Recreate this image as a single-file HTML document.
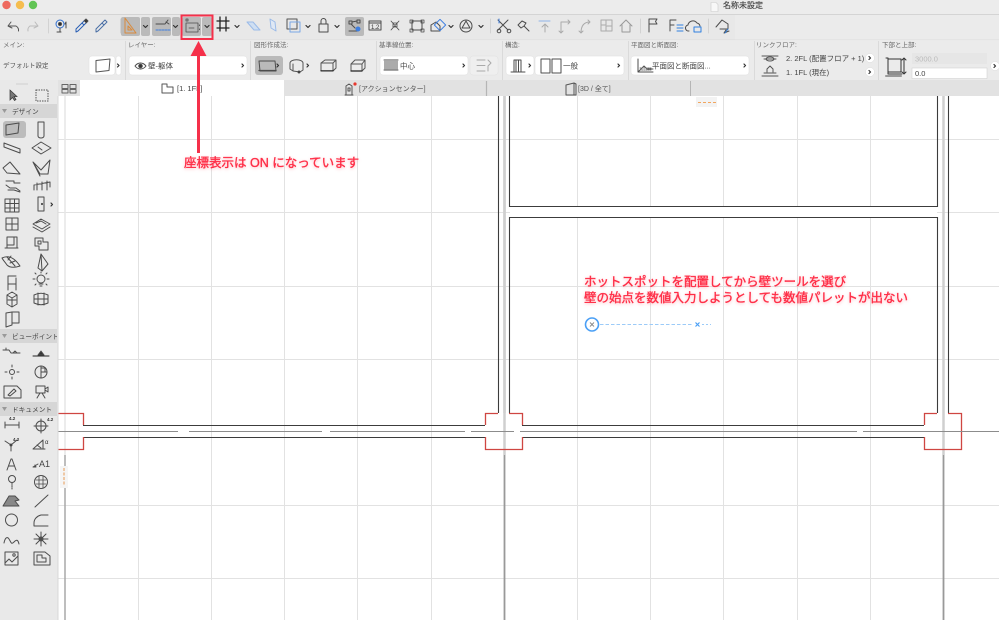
<!DOCTYPE html>
<html><head><meta charset="utf-8"><style>
html,body{margin:0;padding:0;background:#fff;width:999px;height:620px;overflow:hidden}
svg.root{display:block;filter:blur(.35px)}
text{font-family:"Liberation Sans","Noto Sans CJK JP",sans-serif}
.l{font-size:6.5px;fill:#666}
.t{font-size:7.5px;fill:#444}
.i{fill:none;stroke:#4c4c4c;stroke-width:1;stroke-linejoin:round;stroke-linecap:round}
.ch{fill:none;stroke:#333;stroke-width:1.2;stroke-linecap:round;stroke-linejoin:round}
.w{fill:#fff;stroke:#ddd;stroke-width:.5}
.d{fill:none;stroke:#3c3c3c;stroke-width:1.1}
.r{fill:none;stroke:#cf4642;stroke-width:1.3}
.g{stroke:#e2e2e2;stroke-width:1}
.a{font-size:12.500px;fill:#ff2d46;stroke:#ff2d46;stroke-width:.35px}
</style></head><body>
<svg class="root" width="999" height="620" viewBox="0 0 999 620" xmlns="http://www.w3.org/2000/svg">
<defs><clipPath id="pal"><rect x="0" y="96" width="57" height="524"/></clipPath></defs>
<rect width="999" height="620" fill="#fff"/>
<!-- canvas grid -->
<g class="g">
<path d="M138.500 96V620M211.500 96V620M284.500 96V620M357.500 96V620M431.500 96V620M577.500 96V620M650.500 96V620M723.500 96V620M797.500 96V620M870.500 96V620"/>
<path d="M58 139.500H999M58 212.500H999M58 286.500H999M58 359.500H999M58 505.500H999M58 578.500H999"/>
</g>
<path d="M65 96V455" stroke="#e6e6e6" stroke-width="1.500"/>
<path d="M504.500 96V455M943.500 96V455" stroke="#cfcfcf" stroke-width="2.500"/>
<path d="M65 455V620" stroke="#a8a8a8" stroke-width="1.500"/>
<path d="M504.500 455V620M943.500 455V620" stroke="#999" stroke-width="1.800"/>
<!-- white-out behind walls -->
<rect x="510" y="207" width="427" height="10" fill="#fff"/>
<path d="M504.500 96V413" stroke="#cfcfcf" stroke-width="2.500"/>
<!-- walls -->
<path class="d" d="M83 425.500H485M83 437.500H485M522 425.500H924M522 437.500H924M498.500 96V413M509.500 96V206.500H937.500V96M509.500 413V217.500H937.500V413M948.500 96V413"/>
<path class="r" d="M58 413.500H83.500V425M58 449.500H83.500V437M498 413.500H485.500V425M509 413.500H522.500V425M485.500 437V449.500H522.500V437M937 413.500H924.500V425M948 413.500H961.500V449.500H924.500V437"/>
<path d="M58 431.500H999" stroke="#8c8c8c" stroke-width="1"/>
<path d="M178 431.500h11M322 431.500h8M465 431.500h6M857 431.500h6M514 431.500h6" stroke="#fff" stroke-width="2"/>
<!-- orange marks -->
<rect x="696" y="97" width="21" height="10" fill="#f3f3f3"/>
<path d="M698 102.500h18" stroke="#f2a65e" stroke-width="1" stroke-dasharray="3 2"/>
<rect x="60" y="466" width="8" height="22" fill="#f5f5f5"/>
<path d="M64 468v18" stroke="#e89a55" stroke-width="1" stroke-dasharray="3 1.500"/>
<!-- hotspot -->
<circle cx="592" cy="324.500" r="6.500" fill="#fff" stroke="#4a9ff5" stroke-width="1.600"/>
<path d="M590 322.500l4 4M594 322.500l-4 4" stroke="#888" stroke-width=".9"/>
<path d="M600 324.500h92" stroke="#9ccbf8" stroke-width="1" stroke-dasharray="3.500 2"/>
<path d="M695.500 322.500l4 4M699.500 322.500l-4 4" stroke="#4a9ff5" stroke-width="1.200"/>
<path d="M702 324.500h9" stroke="#9ccbf8" stroke-width="1" stroke-dasharray="2 2"/>
<!-- annotations -->
<g style="filter:drop-shadow(0 1px 1.500px rgba(255,60,80,.35))">
<text class="a" x="184" y="167">座標表示は ON になっています</text>
<text class="a" x="584" y="286">ホットスポットを配置してから壁ツールを選び</text>
<text class="a" x="584" y="302">壁の始点を数値入力しようとしても数値パレットが出ない</text>
</g>

<!-- chrome backgrounds -->
<rect x="0" y="0" width="999" height="14" fill="#ececec"/>
<rect x="0" y="14" width="999" height="1" fill="#d4d4d4"/>
<rect x="0" y="15" width="999" height="25" fill="#ebebeb"/>
<rect x="0" y="15" width="735" height="25" fill="#e8e8e8"/>
<rect x="0" y="40" width="999" height="40" fill="#ebebeb"/>
<rect x="0" y="39.500" width="999" height=".6" fill="#dcdcdc"/>
<rect x="0" y="80" width="999" height="16" fill="#e2e2e2"/>
<rect x="0" y="80" width="58" height="540" fill="#e9e9e9"/>
<rect x="57.500" y="96" width="1" height="524" fill="#d8d8d8"/>
<rect x="80" y="80" width="204" height="16" fill="#fff"/>
<path d="M486.500 81V96" stroke="#b5b5b5" stroke-width="1.200"/>
<path d="M690.500 81V96" stroke="#b5b5b5" stroke-width="1"/>
<path d="M125.500 41V80M250.500 41V80M376.500 41V80M502.500 41V80M628.500 41V80M754.500 41V80M878.500 41V80" stroke="#dadada"/>

<!-- traffic lights -->
<circle cx="6.500" cy="5" r="4.200" fill="#ee6a5f"/>
<circle cx="20" cy="5" r="4.200" fill="#f5bd4f"/>
<circle cx="33" cy="5" r="4.200" fill="#61c454"/>
<!-- title -->
<path d="M711 2.500h5l2 2v7h-7z" fill="#f8f8f8" stroke="#ccc" stroke-width=".6"/>
<text x="723" y="8" style="font-size:8px;fill:#444;stroke:#444;stroke-width:.15px">名称未設定</text>

<!-- toolbar gray buttons -->
<g fill="#bababa">
<rect x="121" y="17" width="19" height="19" rx="2"/><rect x="141" y="17" width="9" height="19" rx="2"/>
<rect x="152" y="17" width="19" height="19" rx="2"/><rect x="172" y="17" width="8" height="19" rx="2"/>
<rect x="182" y="17" width="19" height="19" rx="2"/><rect x="202" y="17" width="10" height="19" rx="2"/>
<rect x="345" y="17" width="19" height="19" rx="2"/>
</g>
<!-- toolbar chevrons -->
<g class="ch">
<path d="M143.500 25.500l2 2 2-2M173.500 25.500l2 2 2-2M205 25.500l2 2 2-2M235 25.500l2 2 2-2M306 25.500l2 2 2-2M335 25.500l2 2 2-2M449 25.500l2 2 2-2M479 25.500l2 2 2-2"/>
</g>
<!-- toolbar icons -->
<g class="i">
<path d="M8 26l3-4M8 26l4 2M8 26h8a5 5 0 0 1 2.500 5" stroke="#555"/>
<path d="M38 26l-3-4M38 26l-4 2M38 26h-8a5 5 0 0 0-2 5" stroke="#bbb"/>
<path d="M48.500 19V33M120.500 19V33M490.500 19V33M640.500 19V33M708.500 19V33" stroke="#d2d2d2"/>
<circle cx="60" cy="24" r="4" stroke="#2f6fd0"/><circle cx="60" cy="24" r="1.500" fill="#222"/><path d="M60 28v4M57 32h4M66 22v6M66 22l-1 2"/>
<path d="M76 32l2-1 6-6-2-2-6 6zM82 23l3-3 2 2-3 3" stroke="#2a5fb5"/><path d="M84 21l2-2 2 2-2 2" fill="#333"/>
<path d="M96 32l2-1 6-6-2-2-6 6zM102 23l3-3 2 2-3 3" stroke="#4a6fa5"/>
<path d="M125 33V18l11 15zM128 30v-4l4 4z" stroke="#d98a3c"/>
<path d="M156 24h7M163 24h2l3-4M166 22l3 2"/><path d="M156 30h15" stroke="#3f7fe0" stroke-dasharray="2 1"/>
<rect x="186" y="23" width="12" height="9" stroke-width=".8"/><path d="M186 19h2v2h-2zM189 28h5" stroke-width=".8"/><path d="M199.500 25v.5M199.500 29v.5"/>
<path d="M217 21h12M217 28h12M220 17v14M226 17v14" stroke-width="1.300" stroke="#222"/>
<path d="M247 22l6 0 7 8h-6z" stroke="#9bbbe8" fill="#cfdff2"/>
<path d="M270 19l5 3 1 9-5-3z" stroke="#9bbbe8" fill="#dfe8f4"/>
<rect x="287" y="19" width="10" height="10" stroke="#555"/><rect x="290" y="22" width="10" height="10" stroke="#7aa7e6"/>
<rect x="319" y="24" width="9" height="8"/><path d="M321 24v-3a2.500 2.500 0 0 1 5 0v3"/>
<path d="M349 21h3v3h-3zM357 20h3v3h-3zM352 22l5-1M351 24l4 4M349 31h9"/><circle cx="358" cy="29" r="2" fill="#3f7fe0" stroke="#3f7fe0"/>
<rect x="369" y="21" width="12" height="9"/><text x="371" y="29" style="font-size:6px;fill:#333;stroke:none">1.2</text><path d="M369 23h12"/>
<path d="M391 21l8 9M399 21l-8 9M393 23h4v4h-4z" stroke-width=".8"/>
<rect x="412" y="21" width="10" height="9"/><path d="M410 20h3v3h-3zM421 20h3v3h-3zM410 29h3v3h-3zM421 29h3v3h-3z" stroke-width=".8"/>
<path d="M431 30v-5l5-3 4 4v5h-9z"/><rect x="436" y="21" width="8" height="8" transform="rotate(45 440 25)" stroke="#3f7fe0"/>
<circle cx="466" cy="26" r="6"/><path d="M466 21l4 7h-8z"/>
<path d="M498 20l10 10M508 20l-10 10"/><circle cx="499" cy="31" r="1.800"/><circle cx="509" cy="31" r="1.800"/><path d="M499 19v4" stroke="#3f7fe0"/>
<path d="M518 25l4-4 4 2-2 3 5 5M518 25l3 3 3-2"/>
<path d="M545 32v-8M542 27l3-3 3 3" stroke="#aaa"/><path d="M539 21h11" stroke="#8fb4e8"/>
<path d="M561 33V22h9M559 31l2 2 2-2M568 20l2 2-2 2" stroke="#aaa"/>
<path d="M581 33c0-7 3-11 9-11M579 31l2 2 2-2M588 20l2 2-2 2" stroke="#aaa"/>
<rect x="601" y="20" width="11" height="11" stroke="#aaa"/><path d="M601 25h5v-5M606 31v-5h6" stroke="#aaa"/>
<path d="M620 26l6-6 6 6M622 25v7h8v-7" stroke="#999"/>
<path d="M649 32V19h8l-1.500 2.500L657 24h-8"/>
<path d="M670 31V20h6M670 25h4"/><path d="M677 25h6M677 28h6M677 31h6" stroke="#2f7fe0"/>
<path d="M689 31a3 3 0 0 1-1-6 5 5 0 0 1 9-2 4 4 0 0 1 3 3"/><rect x="694" y="27" width="7" height="5" stroke="#2f7fe0"/>
<path d="M716 27l6-7 6 4v5h-8M726 30l-2 3 5-2"/><path d="M725 33l3-4" stroke="#2f7fe0"/>
</g>

<!-- info labels -->
<text class="l" x="3" y="47">メイン:</text>
<text class="l" x="128" y="47">レイヤー:</text>
<text class="l" x="254" y="47">図形作成法:</text>
<text class="l" x="379" y="47">基準線位置:</text>
<text class="l" x="505" y="47">構造:</text>
<text class="l" x="631" y="47">平面図と断面図:</text>
<text class="l" x="756" y="47">リンクフロア:</text>
<text class="l" x="882" y="47">下部と上部:</text>
<text x="3" y="67.500" style="font-size:6.500px;fill:#555">デフォルト設定</text>

<!-- info controls -->
<rect class="w" x="89" y="56" width="26" height="19" rx="3"/>
<rect class="w" x="116" y="56" width="5" height="19" rx="2"/>
<rect class="w" x="129" y="56" width="118" height="19" rx="3"/>
<rect x="255" y="56" width="28" height="19" rx="3" fill="#bababa"/>
<rect class="w" x="380" y="56" width="88" height="19" rx="3"/>
<rect x="470" y="56" width="28" height="19" rx="3" fill="#efefef" stroke="#e0e0e0" stroke-width=".5"/>
<rect class="w" x="506" y="56" width="28" height="19" rx="3"/>
<rect class="w" x="535" y="56" width="89" height="19" rx="3"/>
<rect class="w" x="631" y="56" width="118" height="19" rx="3"/>
<g class="i">
<path d="M96 60.500l14-1.500-1 11.500-13 1.500z" stroke="#555"/>
<path d="M135 66c3-4 8-4 11 0-3 4-8 4-11 0z"/><circle cx="140.500" cy="66" r="1.800" fill="#333"/>
<path d="M259 61l16 0 1 10-16 0z"/><path d="M259 70.500h17" stroke-width="1.300"/>
<path d="M290 63a6 3 0 0 1 13 0v7l-3 2-7-1-3-2zM293 64v7" stroke="#555"/><circle cx="299" cy="72" r="1" fill="#222"/>
<path d="M321 63l4-3h11v8l-3 3h-12zM321 63h12v8M333 63l3-3" stroke="#555"/><path d="M321 70.800h12" stroke="#222" stroke-width="1.200"/>
<path d="M351 64l4-4h10v8l-3 3h-11zM351 64h11v7M362 64l3-4" stroke="#555"/><path d="M351 71h11" stroke="#222" stroke-width="1.200"/>
<path d="M384 60h14M384 70h14"/>
<path d="M477 60h8M477 71h8M477 65.500h8M488 60l3 3-3 3v5" stroke="#aaa"/>
<path d="M511 72h14M514 72V60h7v12M516 60v12M518.500 60v12"/>
<rect x="541" y="59" width="9" height="14"/><rect x="552" y="59" width="9" height="14"/>
<path d="M638 59v13h15M638 72l6-6 3 3 6 0"/><path d="M640 68h12M640 70h12" stroke="#777" stroke-dasharray="1 1"/>
<path d="M762 56h16M764 59h12M766 59a4 2 0 0 1 8 0 4 2 0 0 1-8 0" stroke="#555"/>
<path d="M762 76h16M764 73h12M767 72v-3l3-3 3 3v3" stroke="#555"/>
<rect x="888" y="59" width="13" height="13" stroke="#333"/><path d="M886 58h2v16h14M904 58v16M902 60l2-2 2 2M902 72l2 2 2-2" stroke="#333"/>
<path d="M886 76h15" stroke="#999" stroke-width="2"/>
</g>
<rect x="384" y="61" width="14" height="9" fill="#888" opacity=".7"/>
<text class="t" x="148" y="68.500">壁-躯体</text>
<text class="t" x="400" y="68.500">中心</text>
<text class="t" x="563" y="68.500">一般</text>
<text class="t" x="652" y="68.500">平面図と断面図...</text>
<g class="ch" stroke-width="1.100">
<path d="M117.500 64l1.500 1.500-1.500 1.500M242 64l1.500 1.500-1.500 1.500M277 64l1.500 1.500-1.500 1.500M307 64l1.500 1.500-1.500 1.500M463 64l1.500 1.500-1.500 1.500M529 64l1.500 1.500-1.500 1.500M618 64l1.500 1.500-1.500 1.500M744 64l1.500 1.500-1.500 1.500"/>
</g>
<text class="t" x="786" y="61">2. 2FL (配置フロア + 1)</text>
<text class="t" x="786" y="75">1. 1FL (現在)</text>
<circle cx="870" cy="58" r="4.500" fill="#fff" stroke="#ddd" stroke-width=".5"/>
<circle cx="870" cy="72" r="4.500" fill="#fff" stroke="#ddd" stroke-width=".5"/>
<circle cx="995" cy="66" r="4.500" fill="#fff" stroke="#ddd" stroke-width=".5"/>
<path class="ch" d="M869 56.500l1.500 1.500-1.500 1.500M869 70.500l1.500 1.500-1.500 1.500M994 64.500l1.500 1.500-1.500 1.500"/>
<rect x="912" y="53" width="75" height="11" fill="#e6e6e6"/>
<rect x="912" y="68" width="75" height="10.500" fill="#fff" stroke="#ccc" stroke-width=".5"/>
<text x="915" y="61.500" style="font-size:7.500px;fill:#bbb">3000.0</text>
<text x="915" y="76" style="font-size:7.500px;fill:#444">0.0</text>

<!-- tab row -->
<g class="i">
<path d="M62 84.500h6v4h-6zM70 84.500h6v4h-6zM62 89.500h6v3.500h-6zM70 89.500h6v3.500h-6z" stroke="#666"/>
<path d="M162 84h5v3h6v6h-11z" stroke="#555"/>
<path d="M349 84l3 2v9h-6v-9zM345 95h8M348 88h2v3h-2z" stroke="#555"/>
<path d="M566 85l8-2v12h-8zM574 83l2 1v11l-2 0" stroke="#555"/>
</g>
<circle cx="355" cy="84" r="1.600" fill="#e8392f"/>
<text class="t" x="177" y="91">[1. 1FL]</text>
<text x="359" y="91" style="font-size:7px;fill:#555">[アクションセンター]</text>
<text x="578" y="91" style="font-size:7px;fill:#555">[3D / 全て]</text>

<!-- palette -->
<path d="M16 84h12" stroke="#d0d0d0"/>
<path d="M10 90v10l2.500-2.500 2 3 1.500-1-2-3h3z" fill="#777" stroke="#333" stroke-width=".7"/>
<rect x="36" y="90" width="12" height="11" fill="none" stroke="#555" stroke-dasharray="1.500 1"/>
<rect x="0" y="104" width="57" height="14" fill="#d6d6d6"/>
<rect x="0" y="329" width="57" height="14" fill="#d6d6d6"/>
<rect x="0" y="402" width="57" height="14" fill="#d6d6d6"/>
<path d="M2 109h5l-2.500 4zM2 334h5l-2.500 4zM2 407h5l-2.500 4z" fill="#999"/>
<g clip-path="url(#pal)">
<text x="12" y="114" style="font-size:6.700px;fill:#444">デザイン</text>
<text x="12" y="339" style="font-size:6.700px;fill:#444">ビューポイント</text>
<text x="12" y="412" style="font-size:6.700px;fill:#444">ドキュメント</text>
</g>
<rect x="3" y="121" width="23" height="17" rx="3" fill="#bcbcbc"/>
<g class="i" stroke="#555">
<path d="M6 125l13-2-1 10-12 2z"/>
<path d="M38 122h6v14a3 2 0 0 1-6 0z"/>
<path d="M4 143l16 6v4l-16-6z"/>
<path d="M32 148l9-6 10 6-10 6zM38 147l4 3"/>
<path d="M3 168l7-6 10 12-13-1zM10 162l-7 6"/>
<path d="M33 162l8 8 9-10-2 14-8 0zM33 162l7 14"/>
<path d="M6 181h8v2h6M6 185l4 3h6l4 3M8 190h6l6 2"/>
<path d="M34 190v-5l16-3v5M37 190v-7M42 190v-8M47 190v-9M34 185l16-3"/>
<rect x="5" y="199" width="14" height="13"/><path d="M5 203.500h14M5 208h14M10 199v13M14.500 199v13"/>
<rect x="38" y="197" width="6" height="14"/><circle cx="42" cy="204" r=".6"/>
<rect x="6" y="218" width="12" height="12"/><path d="M6 224h12M12 218v12"/>
<path d="M33 224l8-5 9 5-8 5zM33 227l9 5 8-5M36 223l5-2 5 3"/>
<rect x="7" y="237" width="10" height="11"/><path d="M5 248h13M14 237v8h-7"/>
<path d="M35 238h8v4h5v8h-9v-4h-4zM38 241h3v3h-3z"/>
<path d="M2 258c6-3 12-1 18 8-6 2-10 2-13-1-2-3-4-5-5-7zM7 257l8 9M11 256l-3 4M15 261l-5 2"/>
<path d="M41 254l7 10-6 7-4-3zM41 254l1 17"/>
<path d="M8 276v8h8v6M8 284v6M16 278v6M8 276h8"/>
<circle cx="41" cy="279" r="4"/><path d="M39 284h4M40 286h2M33 279h2M47 279h2M36 274l-1-1M46 274l1-1M36 284l-1 1M46 284l1 1M41 272v1"/>
<path d="M7 295l5-3 5 3v9l-5 3-5-3zM7 295l5 3 5-3M12 298v9M8 300h8"/>
<path d="M34 295a16 16 0 0 1 14 0v8a16 16 0 0 1-14 0zM38 293v12M44 293v12M34 299h14"/>
<path d="M6 313l6-1v13l-6 2zM12 312h7v11h-7"/>
<path d="M3 350h6l2 3h9M6 348v2M15 351l2 2h-4z"/><path d="M33 356h16" stroke="#222"/><path d="M38 355l3-4 3 4z" fill="#333"/>
<circle cx="12" cy="372" r="2.500"/><path d="M12 365v2M12 377v2M5 372h2M17 372h2"/>
<circle cx="41" cy="372" r="6"/><path d="M41 366v12M41 372h6M41 368h4v4"/>
<path d="M4 398v-12h13l4 4v8zM8 395l6-6 2 2-6 5z"/>
<rect x="36" y="386" width="9" height="7"/><path d="M45 389l3-2v5l-3-2M37 398l3-5h2l3 5"/>
<path d="M5 425h14M5 422v6M19 422v6"/><text x="9" y="420" style="font-size:4.500px;fill:#333;stroke:none;font-weight:bold">4.2</text>
<circle cx="41" cy="426" r="5"/><path d="M41 419v14M34 426h14"/><text x="47" y="421" style="font-size:4.500px;fill:#333;stroke:none;font-weight:bold">4.2</text>
<path d="M5 441l6 4v6M11 445l6-5"/><circle cx="11" cy="445" r="1" fill="#222"/><text x="13" y="441" style="font-size:4.500px;fill:#333;stroke:none;font-weight:bold">4.2</text>
<path d="M33 449l10-9v9zM33 449h12M37 445l4 3"/><text x="45" y="444" style="font-size:6px;fill:#333;stroke:none">α</text>
<path d="M7 470l4-11h1l4 11M8.500 466h6"/>
<path d="M33 467l5-3M33 467h3l-1-2"/><text x="39" y="467" style="font-size:9px;fill:#444;stroke:none">A1</text>
<circle cx="12" cy="479" r="3.500"/><path d="M12 483v6" stroke-dasharray="1.500 1"/>
<circle cx="41" cy="482" r="6.500"/><path d="M36 480h10M36 484h10M39 476v12M43 476v12" stroke-width=".8"/>
<path d="M3 506l6-10h6l4 4-4 1 4 5z" fill="#888"/>
<path d="M35 507l13-12"/>
<circle cx="11.500" cy="520" r="6"/>
<path d="M34 526h14M34 526v-3c0-4 3-7 7-8h7"/>
<path d="M4 543c1-5 3-7 5-4s2 6 5 3 4-2 5 2"/>
<circle cx="41" cy="539" r="2"/><path d="M41 532v14M34 539h14M36 534l10 10M46 534l-10 10"/>
<rect x="5" y="552" width="13" height="13"/><path d="M5 563l4-4 3 3 6-6"/><circle cx="14" cy="555" r="1.200"/>
<path d="M34 552h11l5 4v9H34zM37 555h5v3h4v4h-9z"/>
</g>
<path class="ch" d="M51 203l1.500 1.500-1.500 1.500"/>

<!-- red highlight and arrow -->
<rect x="181.500" y="15.500" width="31" height="23.500" fill="none" stroke="#f5304a" stroke-width="2"/>
<path d="M198.500 153V55" stroke="#f5304a" stroke-width="3"/>
<path d="M198.500 41l8 15h-16z" fill="#f5304a"/>
</svg>
</body></html>
